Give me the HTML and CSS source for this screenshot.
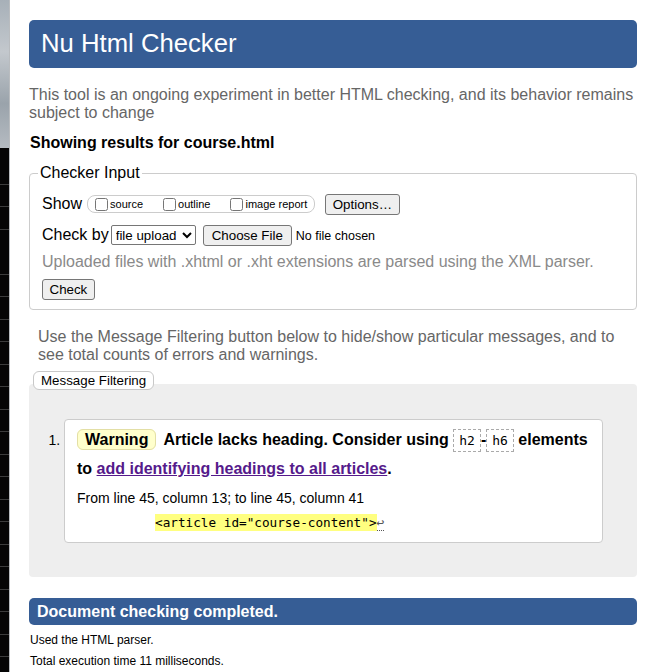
FILE: index.html
```html
<!DOCTYPE html>
<html lang="en">
<head>
<meta charset="utf-8">
<title>Showing results for course.html - Nu Html Checker</title>
<link rel="stylesheet" href="styles.css">
</head>
<body>
<div class="desk" aria-hidden="true"></div>
<main class="page">
  <h1 class="title">Nu Html Checker</h1>
  <p class="intro">This tool is an ongoing experiment in better HTML checking, and its behavior remains subject to change</p>
  <p class="showing">Showing results for course.html</p>
  <form class="checker">
    <fieldset class="input-set">
      <legend class="input-legend">Checker Input</legend>
      <div class="row">
        <span class="row-label">Show</span>
        <span class="opts">
          <label class="opt"><input type="checkbox" class="cb">source</label>
          <label class="opt"><input type="checkbox" class="cb">outline</label>
          <label class="opt"><input type="checkbox" class="cb">image report</label>
        </span>
        <button type="button" class="btn opts-btn">Options…</button>
      </div>
      <div class="row row-by">
        <span class="row-label">Check by</span>
        <select class="sel"><option>file upload</option></select>
        <input type="file" class="file">
      </div>
      <p class="hint">Uploaded files with .xhtml or .xht extensions are parsed using the XML parser.</p>
      <div class="row row-check"><button type="button" class="btn">Check</button></div>
    </fieldset>
  </form>
  <p class="filter-note">Use the Message Filtering button below to hide/show particular messages, and to see total counts of errors and warnings.</p>
  <div class="filter-wrap"><button type="button" class="filter-btn">Message Filtering</button></div>
  <div class="results">
    <ol class="msgs">
      <li class="msg">
        <p class="msg-text"><strong class="badge">Warning</strong><span>Article lacks heading. Consider using <code class="el">h2</code>-<code class="el">h6</code> elements to <a class="ref" href="#">add identifying headings to all articles</a>.</span></p>
        <p class="loc">From line 45, column 13; to line 45, column 41</p>
        <p class="extract"><code class="ex"><b class="hl">&lt;article id="course-content"&gt;</b><span class="lf">↩</span></code></p>
      </li>
    </ol>
  </div>
  <p class="done">Document checking completed.</p>
  <p class="stat">Used the HTML parser.</p>
  <p class="stat">Total execution time 11 milliseconds.</p>
</main>
</body>
</html>
```

FILE: styles.css
```css
html, body {
  margin: 0;
  padding: 0;
}
body {
  display: flex;
  min-height: 100vh;
  background: #fff;
  color: #000;
  font-family: "Liberation Sans", Arial, sans-serif;
  font-size: 16px;
  overflow: hidden;
}
.desk {
  flex: none;
  width: 9px;
  border-right: 1px solid #b9bcbf;
  background:
    linear-gradient(#a7b0b8, #c3c8cd 35%, #9aa3ab 70%, #b5bbc1 100%) 0 0 / 100% 148px no-repeat,
    repeating-linear-gradient(to bottom, #050505 0, #050505 21.5px, #3c3c3c 21.5px, #3c3c3c 22.5px) 0 140px / 100% 100% repeat-y,
    #050505;
}
.page {
  flex: 1;
  min-width: 0;
  padding: 20px 16px 0 19px;
}
.title {
  margin: 0;
  height: 48px;
  line-height: 47px;
  padding: 0 12px;
  background: #365d95;
  color: #fff;
  font-size: 25.7px;
  font-weight: normal;
  border-radius: 5px;
}
.intro {
  margin: 18px 0 0;
  color: #666;
  line-height: 17.5px;
}
.showing {
  margin: 13px 0 0 1px;
  font-weight: bold;
  line-height: 18px;
}
.checker {
  margin: 0;
}
.input-set {
  margin: 12px 0 0;
  padding: 11px 12px 9px;
  border: 1px solid #ccc;
  border-radius: 4px;
}
.input-legend {
  margin-left: -4px;
  padding: 0 2px;
  line-height: 18px;
}
.row {
  display: flex;
  align-items: center;
  height: 22px;
}
.row-label {
  line-height: 18px;
}
.opts {
  display: inline-flex;
  align-items: center;
  gap: 20px;
  box-sizing: border-box;
  height: 18px;
  margin-left: 5px;
  padding: 0 7px;
  border: 1px solid #ccc;
  border-radius: 8px;
  font-size: 11px;
}
.opt {
  display: inline-flex;
  align-items: center;
  gap: 2px;
}
.cb {
  width: 13px;
  height: 13px;
  margin: 1px 0 0;
}
.btn, .file::file-selector-button {
  box-sizing: border-box;
  height: 21px;
  padding: 0 6.5px;
  border: 1px solid #767676;
  border-radius: 3px;
  background: #efefef;
  color: #000;
  font-family: "Liberation Sans", Arial, sans-serif;
  font-size: 13.33px;
}
.opts-btn {
  margin-left: 10px;
}
.row-by {
  margin-top: 9px;
}
.sel {
  box-sizing: border-box;
  width: 85px;
  height: 20px;
  margin-left: 2px;
  font-family: "Liberation Sans", Arial, sans-serif;
  font-size: 13.33px;
  color: #000;
  background: #fff;
  border: 1px solid #767676;
  border-radius: 2px;
}
.file {
  margin-left: 7px;
  font-family: "Liberation Sans", Arial, sans-serif;
  font-size: 12.5px;
  color: #000;
}
.file::file-selector-button {
  margin-right: 4px;
  padding: 0 8px;
}
.hint {
  margin: 7px 0 0;
  color: #8a8a8a;
  line-height: 18px;
}
.row-check {
  margin-top: 8px;
  height: 21px;
}
.filter-note {
  margin: 18px 0 0 9px;
  color: #666;
  line-height: 18px;
}
.filter-wrap {
  margin: 7px 0 -6px 4px;
  position: relative;
  z-index: 1;
  height: 19px;
}
.filter-btn {
  box-sizing: border-box;
  height: 19px;
  padding: 0 7px;
  border: 1px solid #c8c8c8;
  border-radius: 6px;
  background: #fff;
  color: #000;
  font-family: "Liberation Sans", Arial, sans-serif;
  font-size: 13.33px;
  line-height: 17px;
}
.results {
  padding: 35px 34px 34px 35px;
  background: #eee;
  border-radius: 4px;
}
.msgs {
  margin: 0;
  padding: 0;
  list-style: decimal outside;
  font-size: 14px;
}
.msg {
  padding: 6px 12px 9px;
  background: #fff;
  border: 1px solid #ccc;
  border-radius: 4px;
}
.msg-text {
  margin: 0;
  font-size: 16px;
  font-weight: bold;
  line-height: 28px;
}
.badge {
  padding: 1px 7px;
  margin-right: 7px;
  background: #ffffcc;
  border: 1px solid #e3dfa6;
  border-radius: 6px;
}
.el {
  padding: 3px 5px;
  border: 1px dashed #aaa;
  font-family: "DejaVu Sans Mono", "Liberation Mono", monospace;
  font-size: 13px;
  font-weight: normal;
}
.ref {
  color: #551a8b;
  text-decoration: underline;
}
.loc {
  margin: 5px 0 0;
  font-size: 14px;
  line-height: 20px;
}
.extract {
  margin: 4px 0 0;
  padding-left: 78px;
  line-height: 20px;
}
.ex {
  font-family: "DejaVu Sans Mono", "Liberation Mono", monospace;
  font-size: 12.7px;
}
.hl {
  font-weight: normal;
  background: #ffff80;
  padding: 1px 0;
}
.lf {
  color: #555;
  border-bottom: 1px dotted #555;
  font-size: 13px;
}
.done {
  margin: 21px 0 0;
  height: 27px;
  padding: 0 8px;
  line-height: 27px;
  background: #365d95;
  color: #fff;
  font-weight: bold;
  border-radius: 5px;
}
.stat {
  margin: 0 0 0 1px;
  font-size: 12px;
  line-height: 20.5px;
}
.done + .stat {
  margin-top: 5px;
}
```
